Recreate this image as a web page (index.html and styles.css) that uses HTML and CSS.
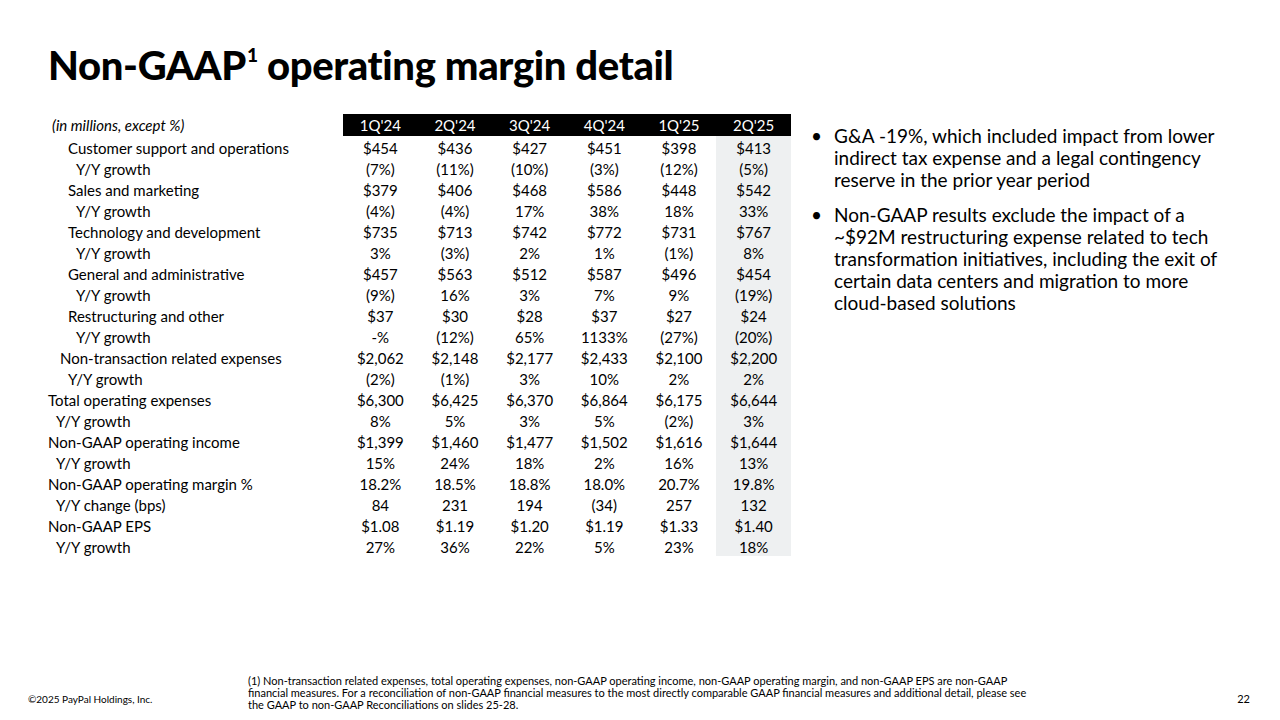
FILE: index.html
```html
<!DOCTYPE html>
<html>
<head>
<meta charset="utf-8">
<link rel="stylesheet" href="styles.css">
</head>
<body>
<div class="slide">
  <h1 class="title">Non-GAAP<sup>1</sup> operating margin detail</h1>
  <div class="main">
    <table class="fin">
      <colgroup>
        <col class="c-label"><col class="c-q"><col class="c-q"><col class="c-q"><col class="c-q"><col class="c-q"><col class="c-q">
      </colgroup>
      <thead>
        <tr>
          <th class="unit">(in millions, except %)</th>
          <th class="qh">1Q'24</th><th class="qh">2Q'24</th><th class="qh">3Q'24</th><th class="qh">4Q'24</th><th class="qh">1Q'25</th><th class="qh">2Q'25</th>
        </tr>
      </thead>
      <tbody>
        <tr><td class="l3">Customer support and operations</td><td>$454</td><td>$436</td><td>$427</td><td>$451</td><td>$398</td><td class="hl">$413</td></tr>
        <tr><td class="l4">Y/Y growth</td><td>(7%)</td><td>(11%)</td><td>(10%)</td><td>(3%)</td><td>(12%)</td><td class="hl">(5%)</td></tr>
        <tr><td class="l3">Sales and marketing</td><td>$379</td><td>$406</td><td>$468</td><td>$586</td><td>$448</td><td class="hl">$542</td></tr>
        <tr><td class="l4">Y/Y growth</td><td>(4%)</td><td>(4%)</td><td>17%</td><td>38%</td><td>18%</td><td class="hl">33%</td></tr>
        <tr><td class="l3">Technology and development</td><td>$735</td><td>$713</td><td>$742</td><td>$772</td><td>$731</td><td class="hl">$767</td></tr>
        <tr><td class="l4">Y/Y growth</td><td>3%</td><td>(3%)</td><td>2%</td><td>1%</td><td>(1%)</td><td class="hl">8%</td></tr>
        <tr><td class="l3">General and administrative</td><td>$457</td><td>$563</td><td>$512</td><td>$587</td><td>$496</td><td class="hl">$454</td></tr>
        <tr><td class="l4">Y/Y growth</td><td>(9%)</td><td>16%</td><td>3%</td><td>7%</td><td>9%</td><td class="hl">(19%)</td></tr>
        <tr><td class="l3">Restructuring and other</td><td>$37</td><td>$30</td><td>$28</td><td>$37</td><td>$27</td><td class="hl">$24</td></tr>
        <tr><td class="l4">Y/Y growth</td><td>-%</td><td>(12%)</td><td>65%</td><td>1133%</td><td>(27%)</td><td class="hl">(20%)</td></tr>
        <tr><td class="l2">Non-transaction related expenses</td><td>$2,062</td><td>$2,148</td><td>$2,177</td><td>$2,433</td><td>$2,100</td><td class="hl">$2,200</td></tr>
        <tr><td class="l3">Y/Y growth</td><td>(2%)</td><td>(1%)</td><td>3%</td><td>10%</td><td>2%</td><td class="hl">2%</td></tr>
        <tr><td class="l0">Total operating expenses</td><td>$6,300</td><td>$6,425</td><td>$6,370</td><td>$6,864</td><td>$6,175</td><td class="hl">$6,644</td></tr>
        <tr><td class="l1">Y/Y growth</td><td>8%</td><td>5%</td><td>3%</td><td>5%</td><td>(2%)</td><td class="hl">3%</td></tr>
        <tr><td class="l0">Non-GAAP operating income</td><td>$1,399</td><td>$1,460</td><td>$1,477</td><td>$1,502</td><td>$1,616</td><td class="hl">$1,644</td></tr>
        <tr><td class="l1">Y/Y growth</td><td>15%</td><td>24%</td><td>18%</td><td>2%</td><td>16%</td><td class="hl">13%</td></tr>
        <tr><td class="l0">Non-GAAP operating margin %</td><td>18.2%</td><td>18.5%</td><td>18.8%</td><td>18.0%</td><td>20.7%</td><td class="hl">19.8%</td></tr>
        <tr><td class="l1">Y/Y change (bps)</td><td>84</td><td>231</td><td>194</td><td>(34)</td><td>257</td><td class="hl">132</td></tr>
        <tr><td class="l0">Non-GAAP EPS</td><td>$1.08</td><td>$1.19</td><td>$1.20</td><td>$1.19</td><td>$1.33</td><td class="hl">$1.40</td></tr>
        <tr><td class="l1">Y/Y growth</td><td>27%</td><td>36%</td><td>22%</td><td>5%</td><td>23%</td><td class="hl">18%</td></tr>
      </tbody>
    </table>
    <ul class="notes">
      <li>G&amp;A -19%, which included impact from lower indirect tax expense and a legal contingency reserve in the prior year period</li>
      <li>Non-GAAP results exclude the impact of a ~$92M restructuring expense related to tech transformation initiatives, including the exit of certain data centers and migration to more cloud-based solutions</li>
    </ul>
  </div>
  <footer class="foot">
    <div class="copy">©2025 PayPal Holdings, Inc.</div>
    <div class="footnote">(1) Non-transaction related expenses, total operating expenses, non-GAAP operating income, non-GAAP operating margin, and non-GAAP EPS are non-GAAP financial measures. For a reconciliation of non-GAAP financial measures to the most directly comparable GAAP financial measures and additional detail, please see the GAAP to non-GAAP Reconciliations on slides 25-28.</div>
    <div class="page">22</div>
  </footer>
</div>
</body>
</html>
```
FILE: styles.css
```css
* { box-sizing: border-box; }
html, body { margin: 0; padding: 0; background: #fff; }
body { font-family: "Lato", "Liberation Sans", sans-serif; color: #000; }
.slide {
  width: 1280px; height: 720px; position: relative; overflow: hidden;
  display: flex; flex-direction: column;
}
.title {
  margin: 41px 0 0 48px; font-size: 40px; font-weight: 900; line-height: 48px;
  letter-spacing: -0.35px;
}
.title sup { font-size: 19px; vertical-align: top; line-height: 19px; position: relative; top: 4px; margin-left: 1px; }
.main { display: flex; margin-top: 25px; padding-left: 48px; }
.fin { border-collapse: collapse; table-layout: fixed; width: 743px; font-size: 15px; }
.c-label { width: 295px; }
.c-q { width: 74.67px; }
.fin th, .fin td { padding: 0; height: 21px; line-height: 21px; white-space: nowrap; }
.fin td { padding-top: 4px; line-height: 17px; }
.fin thead th { height: 22px; line-height: 22px; }
.unit { text-align: left; font-style: italic; font-weight: 400; padding-left: 4px !important; }
.qh { background: #000; color: #fff; font-weight: 400; text-align: center; }
.fin td { text-align: center; }
.fin td.hl { background: #eef0f1; }
.fin td.l0 { text-align: left; padding-left: 0; }
.fin td.l1 { text-align: left; padding-left: 8px; }
.fin td.l2 { text-align: left; padding-left: 12px; }
.fin td.l3 { text-align: left; padding-left: 20px; }
.fin td.l4 { text-align: left; padding-left: 28px; }
.notes {
  list-style: none; margin: 11px 0 0 24px; padding: 0; width: 412px;
  font-size: 19px; line-height: 22px;
}
.notes li { position: relative; padding-left: 19px; margin-bottom: 13px; }
.notes li::before { content: "•"; position: absolute; left: -4px; top: 0; }
.foot {
  margin-top: auto; display: flex; align-items: flex-end; padding: 0 30px 9px 28px;
  font-size: 10px; line-height: 12px;
}
.copy { width: 220px; font-size: 10px; line-height: 12px; position: relative; top: -6px; }
.footnote { width: 790px; font-size: 11px; line-height: 12px; }
.page { margin-left: auto; font-size: 11px; position: relative; top: -6px; }
```
